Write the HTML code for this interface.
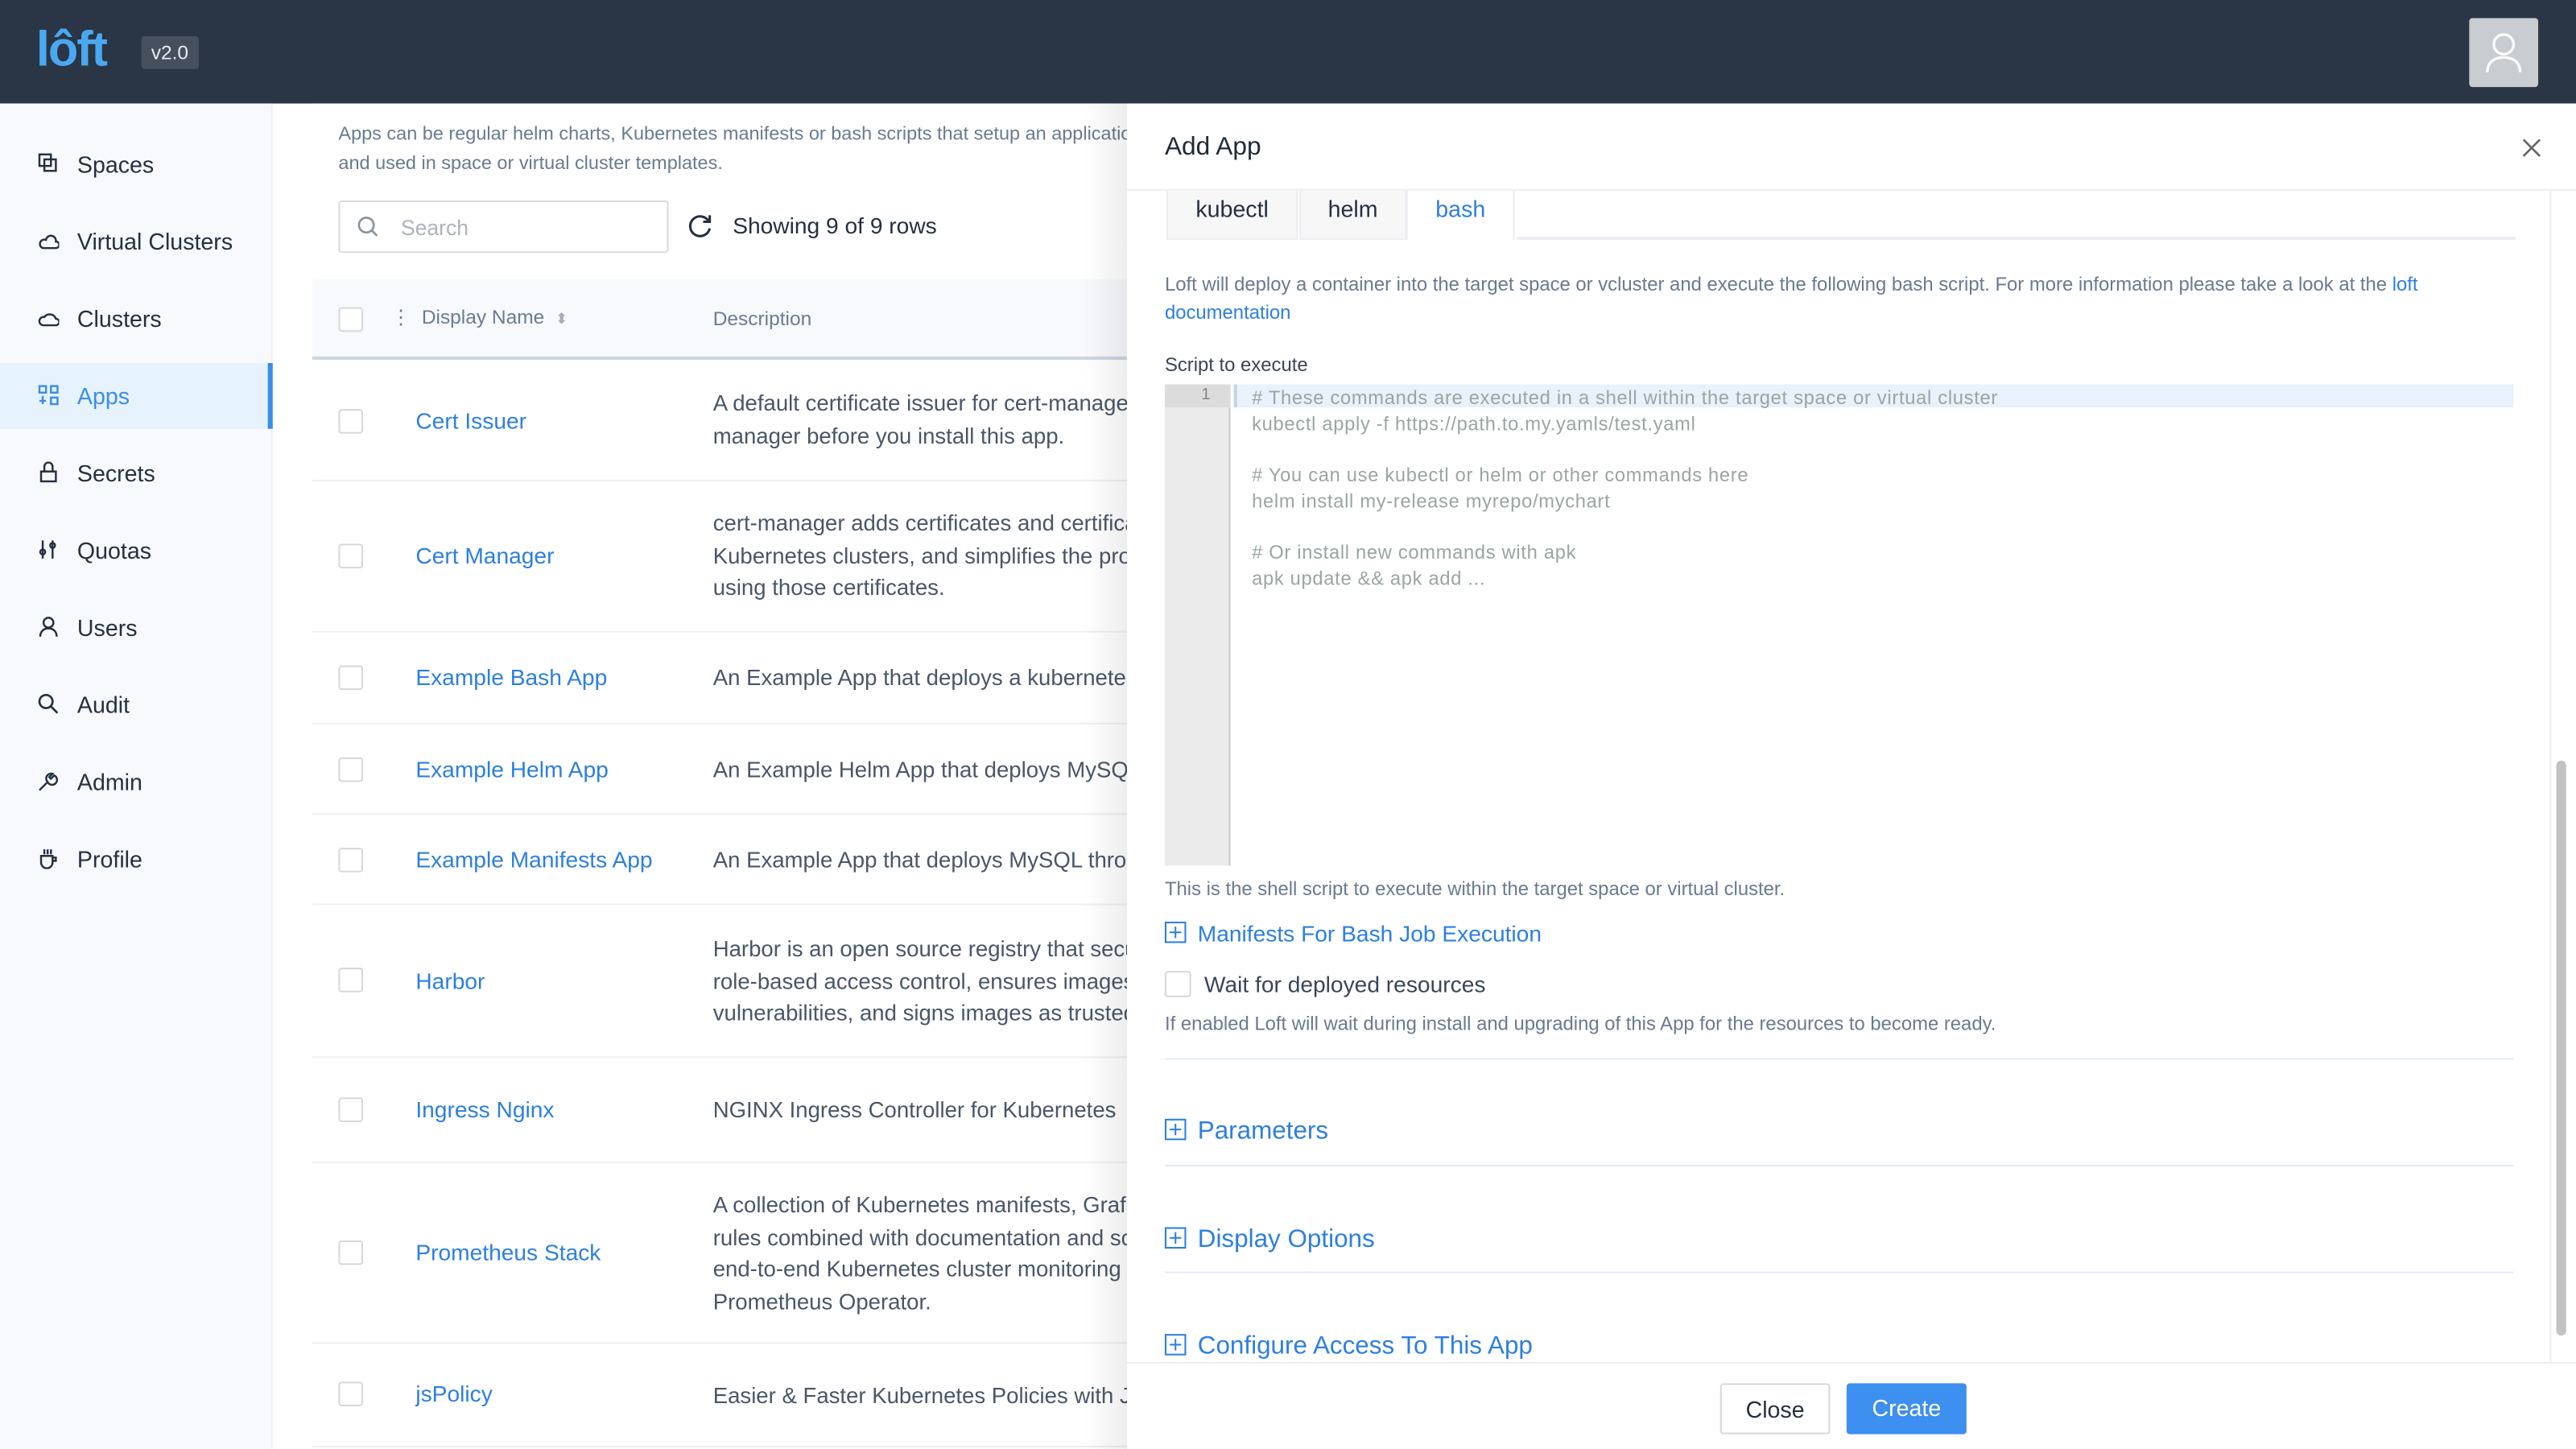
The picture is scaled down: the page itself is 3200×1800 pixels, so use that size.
<!DOCTYPE html>
<html><head><meta charset="utf-8"><style>
*{box-sizing:border-box;margin:0;padding:0}
html,body{width:3200px;height:1800px;overflow:hidden;background:#fff}
#w{width:1568px;height:882px;transform:scale(2.04082);transform-origin:0 0;position:relative;font-family:"Liberation Sans",sans-serif;color:#2c3e50;background:#fff}
.top{position:absolute;left:0;top:0;width:1568px;height:63px;background:#2a3545}
.logo{position:absolute;left:22px;top:14px;font-size:30px;font-weight:bold;color:#4aa8f0;letter-spacing:-1px}
.ver{position:absolute;left:86px;top:22px;background:#454f5e;color:#e8ecf0;font-size:12px;padding:3px 6px;border-radius:2px}
.av{position:absolute;left:1503px;top:11px;width:42px;height:42px;background:#c9ccd1;border-radius:2px}
.side{position:absolute;left:0;top:63px;width:166px;height:819px;background:#f8f9fc;border-right:1px solid #eef0f4}
.nav{position:absolute;left:0;width:166px;height:40px;font-size:14px;color:#253041;display:flex;align-items:center;padding-left:47px}
.nav svg{position:absolute;left:23px;top:13px}
.nav.act{background:#e6f2fc;color:#3b8ee8;border-right:3px solid #3b8ee8}
.card{position:absolute;left:190px;top:63px;width:520px;height:819px;background:#fff}
.intro{position:absolute;left:16px;top:10px;font-size:11.5px;line-height:18px;color:#6a7a90;width:600px}
.search{position:absolute;left:16px;top:59px;width:201px;height:32px;border:1px solid #d8dbe0;border-radius:2px;font-size:13px;color:#aeb3ba;padding:8px 0 0 37px}
.search svg{position:absolute;left:10px;top:8px}
.show{position:absolute;left:256px;top:67px;font-size:13.8px;color:#253041}
.thead{position:absolute;left:0;top:107px;width:520px;height:49px;background:#f8f9fc;border-bottom:2px solid #cdd5e0;font-size:12px;color:#6b7c93}
.cb{position:absolute;left:16px;width:15px;height:15px;border:1px solid #d5d8dd;border-radius:2px;background:#fff}
.row{position:absolute;left:0;width:520px;border-bottom:1px solid #eef0f4}
.nm{position:absolute;left:63px;font-size:13.8px;color:#2d7fe0}
.ds{position:absolute;left:244px;font-size:13.5px;line-height:19.5px;color:#4a5668;white-space:nowrap}
.shade{position:absolute;left:660px;top:63px;width:26px;height:819px;background:linear-gradient(to right,rgba(0,0,0,0),rgba(0,0,0,0.07))}
.dr{position:absolute;left:686px;top:63px;width:882px;height:819px;background:#fff}
.dtitle{position:absolute;left:23px;top:18px;font-size:15.5px;color:#1f2a38}
.hdl{position:absolute;left:0;top:52px;width:882px;height:1px;background:#eceef1}
.tab{position:absolute;top:53px;height:30px;font-size:14px;padding-top:3px;text-align:center;background:#f7f7f8;border:1px solid #eceef1;border-top:none;color:#253041}
.tabline{position:absolute;left:237px;top:81px;width:608px;height:2px;background:#eceef1}
.p{position:absolute;left:23px;font-size:11.7px;color:#6a7a90;line-height:17px}
.a{color:#2d7fe0}
.ed{position:absolute;left:23px;top:171px;width:821px;height:293px;background:#fff}
.gut{position:absolute;left:0;top:0;width:40px;height:293px;background:#ebebeb;border-right:1px solid #ccc}
.hl{position:absolute;left:42px;top:0;width:779px;height:14px;background:#e8f1fc;border-left:2px solid #c6d3e4}
.code{position:absolute;left:53px;top:1px;font-size:11.6px;letter-spacing:0.35px;line-height:15.7px;color:#9aa69f;white-space:pre}
.plus{display:inline-block;width:13px;height:13px;border:1px solid #2d7fe0;position:relative;vertical-align:-1px;margin-right:7px}
.plus:before{content:"";position:absolute;left:2px;top:5px;width:7px;height:1px;background:#2d7fe0}
.plus:after{content:"";position:absolute;left:5px;top:2px;width:1px;height:7px;background:#2d7fe0}
.sec{position:absolute;left:23px;color:#2d7fe0;font-size:15.4px}
.sep{position:absolute;left:23px;width:821px;height:1px;background:#e3eaf5}
.foot{position:absolute;left:0;top:766px;width:882px;height:53px;background:#fff;border-top:1px solid #eceef1}
.btn{position:absolute;top:12px;height:31px;font-size:14px;padding-top:7px;text-align:center;border-radius:2px}
.sb{position:absolute;left:870px;top:400px;width:6px;height:350px;background:#c2c2c2;border-radius:3px}
.sbt{position:absolute;left:866px;top:53px;width:1px;height:713px;background:#eceef1}
</style></head><body><div id="w">
<div class="top"><div class="logo">lôft</div><div class="ver">v2.0</div>
<div class="av"><svg width="42" height="42" viewBox="0 0 42 42" fill="none" stroke="#fff" stroke-width="1.6"><circle cx="21" cy="16" r="6"/><path d="M11 33c0-6 4-9 10-9s10 3 10 9"/></svg></div></div>
<div class="side">
<div class="nav" style="top:17px"><svg width="13" height="13" fill="none" stroke="#253041" stroke-width="1.2"><rect x="1" y="1" width="7" height="7"/><rect x="4" y="4" width="7" height="7"/></svg>Spaces</div>
<div class="nav" style="top:64px"><svg width="13" height="13" fill="none" stroke="#253041" stroke-width="1.2"><path d="M3 11h8a2 2 0 0 0 0-4 3 3 0 0 0-6-1 2.5 2.5 0 0 0-2 5z"/></svg>Virtual Clusters</div>
<div class="nav" style="top:111px"><svg width="13" height="13" fill="none" stroke="#253041" stroke-width="1.2"><path d="M3 11h8a2 2 0 0 0 0-4 4 4 0 0 0-7-1 2.5 2.5 0 0 0-1 5z"/></svg>Clusters</div>
<div class="nav act" style="top:158px"><svg width="13" height="13" fill="none" stroke="#3b8ee8" stroke-width="1.2"><rect x="1" y="1" width="4" height="4"/><rect x="8" y="1" width="4" height="4"/><rect x="8" y="8" width="4" height="4"/><path d="M3 7v5M1 10h4"/></svg>Apps</div>
<div class="nav" style="top:205px"><svg width="13" height="13" fill="none" stroke="#253041" stroke-width="1.2"><rect x="2" y="6" width="9" height="6"/><path d="M4 6V3a2.5 2.5 0 0 1 5 0v3"/></svg>Secrets</div>
<div class="nav" style="top:252px"><svg width="13" height="13" fill="none" stroke="#253041" stroke-width="1.2"><path d="M3 1v11M9 1v11"/><circle cx="3" cy="8" r="1.5"/><circle cx="9" cy="4" r="1.5"/></svg>Quotas</div>
<div class="nav" style="top:299px"><svg width="13" height="13" fill="none" stroke="#253041" stroke-width="1.2"><circle cx="6.5" cy="4" r="3"/><path d="M1.5 12.5c0-3 2-5 5-5s5 2 5 5"/></svg>Users</div>
<div class="nav" style="top:346px"><svg width="13" height="13" fill="none" stroke="#253041" stroke-width="1.3"><circle cx="5" cy="5" r="4"/><path d="M8 8l4 4"/></svg>Audit</div>
<div class="nav" style="top:393px"><svg width="13" height="13" fill="none" stroke="#253041" stroke-width="1.2"><path d="M1 12l5-5M6 7a3 3 0 1 0 4-4L8 5 7 4l2-2a3 3 0 0 0-3 5z"/></svg>Admin</div>
<div class="nav" style="top:440px"><svg width="13" height="13" fill="none" stroke="#253041" stroke-width="1.2"><path d="M2 5h7v4a3 3 0 0 1-7 0zM9 6h2v2H9M4 1v3M6 1v3M8 1v3"/></svg>Profile</div>
</div>
<div class="card">
<div class="intro">Apps can be regular helm charts, Kubernetes manifests or bash scripts that setup an application<br>and used in space or virtual cluster templates.</div>
<div class="search"><svg width="14" height="14" fill="none" stroke="#8a929c" stroke-width="1.3"><circle cx="6" cy="6" r="4.5"/><path d="M9.5 9.5l3 3"/></svg>Search</div>
<svg style="position:absolute;left:229px;top:67px" width="15" height="15" fill="none" stroke="#253041" stroke-width="1.5"><path d="M12.5 5A6 6 0 1 0 13 9"/><path d="M13 1v4H9"/></svg>
<div class="show">Showing 9 of 9 rows</div>
<div class="thead"><div class="cb" style="top:17px"></div><div style="position:absolute;left:48px;top:16px">⋮&nbsp; Display Name &nbsp;<span style="font-size:9px;color:#aab">⬍</span></div><div style="position:absolute;left:244px;top:17px">Description</div></div>
<div class="row" style="top:157px;height:73px"><div class="cb" style="top:29px"></div><div class="nm" style="top:29px">Cert Issuer</div><div class="ds" style="top:16px">A default certificate issuer for cert-manager. Please install cert-<br>manager before you install this app.</div></div>
<div class="row" style="top:230px;height:92px"><div class="cb" style="top:38px"></div><div class="nm" style="top:38px">Cert Manager</div><div class="ds" style="top:16px">cert-manager adds certificates and certificate issuers as resource types in<br>Kubernetes clusters, and simplifies the process of obtaining, renewing and<br>using those certificates.</div></div>
<div class="row" style="top:322px;height:56px"><div class="cb" style="top:20px"></div><div class="nm" style="top:20px">Example Bash App</div><div class="ds" style="top:18px">An Example App that deploys a kubernetes manifest</div></div>
<div class="row" style="top:378px;height:55px"><div class="cb" style="top:20px"></div><div class="nm" style="top:20px">Example Helm App</div><div class="ds" style="top:18px">An Example Helm App that deploys MySQL</div></div>
<div class="row" style="top:433px;height:55px"><div class="cb" style="top:20px"></div><div class="nm" style="top:20px">Example Manifests App</div><div class="ds" style="top:18px">An Example App that deploys MySQL through manifests</div></div>
<div class="row" style="top:488px;height:93px"><div class="cb" style="top:38px"></div><div class="nm" style="top:39px">Harbor</div><div class="ds" style="top:17px">Harbor is an open source registry that secures artifacts with policies and<br>role-based access control, ensures images are scanned and free from<br>vulnerabilities, and signs images as trusted.</div></div>
<div class="row" style="top:581px;height:64px"><div class="cb" style="top:24px"></div><div class="nm" style="top:24px">Ingress Nginx</div><div class="ds" style="top:22px">NGINX Ingress Controller for Kubernetes</div></div>
<div class="row" style="top:645px;height:110px"><div class="cb" style="top:47px"></div><div class="nm" style="top:47px">Prometheus Stack</div><div class="ds" style="top:16px">A collection of Kubernetes manifests, Grafana dashboards, and Prometheus<br>rules combined with documentation and scripts to provide easy to operate<br>end-to-end Kubernetes cluster monitoring with Prometheus using the<br>Prometheus Operator.</div></div>
<div class="row" style="top:755px;height:63px"><div class="cb" style="top:23px"></div><div class="nm" style="top:23px">jsPolicy</div><div class="ds" style="top:22px">Easier &amp; Faster Kubernetes Policies with JavaScript</div></div>
</div>
<div class="shade"></div>
<div class="dr">
<div class="dtitle">Add App</div>
<svg style="position:absolute;left:849px;top:21px" width="12" height="12" stroke="#666" stroke-width="1.3"><path d="M1 1l10 10M11 1L1 11"/></svg>
<div class="hdl"></div>
<div class="tab" style="left:24px;width:80px">kubectl</div>
<div class="tab" style="left:105px;width:65px">helm</div>
<div class="tab" style="left:170px;width:66px;background:#fff;color:#2d7fe0;border-bottom:none">bash</div>
<div class="tabline"></div>
<div class="p" style="top:102px;width:800px">Loft will deploy a container into the target space or vcluster and execute the following bash script. For more information please take a look at the <span class="a">loft documentation</span></div>
<div class="p" style="top:151px;color:#3a4658">Script to execute</div>
<div class="ed"><div class="gut"><div style="position:absolute;left:0;top:0;width:40px;height:14px;background:#dcdcdc;font-size:10px;color:#888;text-align:center;line-height:14px;padding-left:10px">1</div></div><div class="hl"></div>
<div class="code"># These commands are executed in a shell within the target space or virtual cluster
kubectl apply -f https://path.to.my.yamls/test.yaml

# You can use kubectl or helm or other commands here
helm install my-release myrepo/mychart

# Or install new commands with apk
apk update &amp;&amp; apk add ...</div></div>
<div class="p" style="top:470px">This is the shell script to execute within the target space or virtual cluster.</div>
<div class="sec" style="top:498px;font-size:13.8px"><span class="plus"></span>Manifests For Bash Job Execution</div>
<div style="position:absolute;left:23px;top:528px;width:16px;height:16px;border:1px solid #d5d8dd;border-radius:2px"></div>
<div style="position:absolute;left:47px;top:529px;font-size:13.8px;color:#3a4658">Wait for deployed resources</div>
<div class="p" style="top:552px">If enabled Loft will wait during install and upgrading of this App for the resources to become ready.</div>
<div class="sep" style="top:581px"></div>
<div class="sec" style="top:617px"><span class="plus"></span>Parameters</div>
<div class="sep" style="top:646px"></div>
<div class="sec" style="top:683px"><span class="plus"></span>Display Options</div>
<div class="sep" style="top:711px"></div>
<div class="sec" style="top:748px"><span class="plus"></span>Configure Access To This App</div>
<div class="sbt"></div><div class="sb"></div>
<div class="foot">
<div class="btn" style="left:361px;width:67px;border:1px solid #d5d8dd;color:#253041">Close</div>
<div class="btn" style="left:438px;width:73px;background:#3d8ff0;color:#fff">Create</div>
</div>
</div>
</div></body></html>
